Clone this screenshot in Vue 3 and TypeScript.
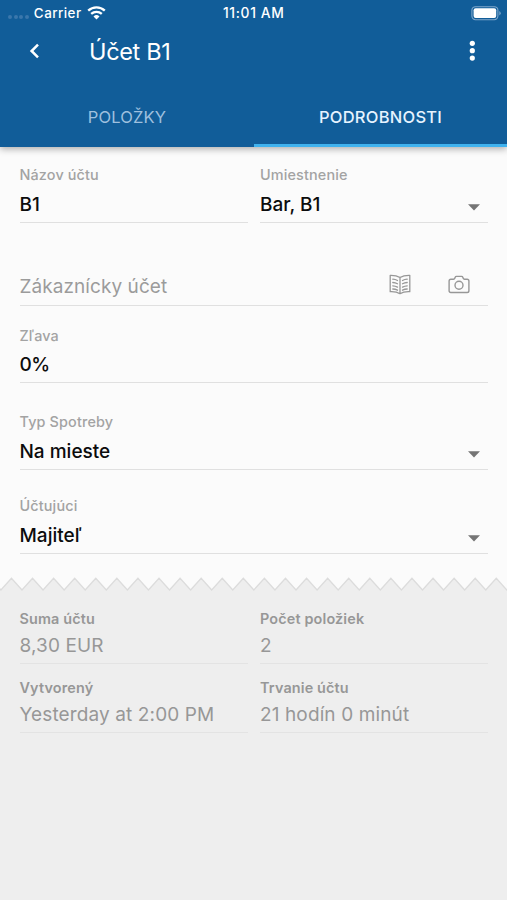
<script setup lang="ts">
interface Field {
  id: string
  label?: string
  value?: string
  placeholder?: string
  select?: boolean
}

const formFields: Field[] = [
  { id: 'name', label: 'Názov účtu', value: 'B1' },
  { id: 'place', label: 'Umiestnenie', value: 'Bar, B1', select: true },
  { id: 'customer', placeholder: 'Zákaznícky účet' },
  { id: 'discount', label: 'Zľava', value: '0%' },
  { id: 'type', label: 'Typ Spotreby', value: 'Na mieste', select: true },
  { id: 'cashier', label: 'Účtujúci', value: 'Majiteľ', select: true },
]

const summary: Field[] = [
  { id: 'sum', label: 'Suma účtu', value: '8,30 EUR' },
  { id: 'count', label: 'Počet položiek', value: '2' },
  { id: 'created', label: 'Vytvorený', value: 'Yesterday at 2:00 PM' },
  { id: 'duration', label: 'Trvanie účtu', value: '21 hodín 0 minút' },
]

// Torn-paper edge: alternating valleys and peaks across the full width.
const period = 21.08
const edge = Array.from({ length: 52 }, (_, i) => {
  const x = (0.9 - period + (i * period) / 2).toFixed(2)
  return `${x},${i % 2 ? 1.2 : 13}`
}).join(' ')
const edgeFill = `${edge} 530,18 -25,18`
</script>

<template>
  <div class="screen">
    <header class="header">
      <div class="status">
        <div class="carrier">
          <span class="signal"><i v-for="n in 4" :key="n" /></span>
          <span class="carrier-name">Carrier</span>
          <svg class="wifi" width="19" height="14" viewBox="0 0 19 14">
            <path d="M1.2 4.7a12 12 0 0 1 16.6 0M4.2 7.9a7.8 7.8 0 0 1 10.6 0" fill="none" stroke="#fff" stroke-width="2.3" />
            <path d="M6.5 10.4a4.4 4.4 0 0 1 6 0l-3 3.1z" fill="#fff" />
          </svg>
        </div>
        <span class="time">11:01 AM</span>
        <svg class="battery" width="30" height="15" viewBox="0 0 30 15">
          <rect x="0.9" y="0.7" width="26" height="13" rx="3.6" fill="none" stroke="#7fa7cb" stroke-width="1.1" />
          <rect x="2.6" y="2.3" width="22.6" height="9.8" rx="2" fill="#fff" />
          <path d="M28.3 5v4.4q1.4-.7 1.4-2.2T28.3 5z" fill="#7fa7cb" />
        </svg>
      </div>
      <div class="toolbar">
        <svg class="back" width="12" height="16" viewBox="0 0 12 16">
          <path d="M10 1.6 3.6 8l6.4 6.4" fill="none" stroke="#fff" stroke-width="2.5" />
        </svg>
        <h1 class="title">Účet B1</h1>
        <svg class="more" width="6" height="22" viewBox="0 0 6 22">
          <circle cx="3.3" cy="3.3" r="2.6" fill="#fff" />
          <circle cx="3.3" cy="10.7" r="2.6" fill="#fff" />
          <circle cx="3.3" cy="18.1" r="2.6" fill="#fff" />
        </svg>
      </div>
      <nav class="tabs">
        <a class="tab items">POLOŽKY</a>
        <a class="tab active">PODROBNOSTI</a>
      </nav>
    </header>

    <main class="form">
      <div v-for="f in formFields" :key="f.id" class="field" :class="f.id">
        <div v-if="f.label" class="label"><span>{{ f.label }}</span></div>
        <div class="value" :class="{ placeholder: f.placeholder }">
          <span class="text">{{ f.value ?? f.placeholder }}</span>
          <svg v-if="f.select" class="caret" width="12" height="7" viewBox="0 0 12 7">
            <path d="M0 .3h12L6 6.5z" fill="#757575" />
          </svg>
          <span v-if="f.placeholder" class="actions">
            <svg width="22" height="22" viewBox="0 0 22 22" fill="none" stroke="#979797" stroke-width="1.3" stroke-linejoin="round" stroke-linecap="round">
              <path d="M11 3.5C8.5 1.9 4.6 1.2 1.2 1.3v16.4c3.6-.2 7.4.5 9.8 2 2.4-1.5 6.2-2.2 9.8-2V1.3C17.4 1.2 13.5 1.9 11 3.5zM11 3.5v16" />
              <path d="M3.8 5.2q2.5.1 4.7 1.3M3.8 8.5q2.5.1 4.7 1.3M3.8 11.8q2.5.1 4.7 1.3M3.8 15q2.5.1 4.7 1.2M18.2 5.2q-2.5.1-4.7 1.3M18.2 8.5q-2.5.1-4.7 1.3M18.2 11.8q-2.5.1-4.7 1.3M18.2 15q-2.5.1-4.7 1.2" />
            </svg>
            <svg width="22" height="22" viewBox="0 0 22 22" fill="none" stroke="#979797" stroke-width="1.4" stroke-linejoin="round">
              <path d="M2.9 5.2h2.6q1 0 1.3-.9l.4-1.1q.3-.8 1.200-.8h5.200q.9 0 1.200.8l.4 1.100q.3.900 1.300.9h2.600q1.800 0 1.800 1.800v9.700q0 1.800-1.800 1.800H2.900q-1.800 0-1.800-1.800V7q0-1.800 1.800-1.800z" />
              <circle cx="11" cy="11.2" r="4" />
            </svg>
          </span>
        </div>
      </div>
    </main>

    <svg class="tear" width="507" height="18" viewBox="0 0 507 18">
      <polygon :points="edgeFill" fill="#eee" />
      <polyline :points="edge" fill="none" stroke="#dcdcdc" stroke-width="1.3" />
    </svg>

    <section class="summary">
      <div v-for="f in summary" :key="f.id" class="field" :class="f.id">
        <div class="label"><span>{{ f.label }}</span></div>
        <div class="value"><span class="text">{{ f.value }}</span></div>
      </div>
    </section>
  </div>
</template>

<style>
body {
  margin: 0;
  background: #eee;
}
</style>

<style scoped>
.screen {
  width: 507px;
  height: 900px;
  overflow: hidden;
  display: flex;
  flex-direction: column;
  background: #fbfbfb;
  font-family: Inter, "Liberation Sans", sans-serif;
}
.header {
  height: 146.5px;
  flex: none;
  display: flex;
  flex-direction: column;
  background: #115d99;
  color: #fff;
  box-shadow: 0 2px 7px rgba(0, 0, 0, 0.32);
}
.status {
  height: 26px;
  display: grid;
  grid-template-columns: 1fr auto 1fr;
  align-items: center;
  padding: 0 6px 0 8px;
  font-size: 13.4px;
  font-weight: 500;
}
.carrier {
  display: flex;
  align-items: center;
}
.carrier-name {
  letter-spacing: 0.45px;
}
.time {
  font-size: 13.8px;
  letter-spacing: 0.65px;
  margin-right: 1.5px;
}
.signal {
  display: flex;
  gap: 1.7px;
  margin: 8px 4.8px 0 0;
}
.signal i {
  width: 4px;
  height: 4px;
  border-radius: 50%;
  background: #3a77ac;
}
.wifi {
  margin-left: 5.5px;
}
.battery {
  justify-self: end;
  margin-right: 0.3px;
}
.toolbar {
  height: 61px;
  display: flex;
  align-items: center;
  padding: 0 32px 12px 28px;
  box-sizing: border-box;
}
.title {
  flex: 1;
  margin: 2px 0 0 49px;
  font-size: 23.5px;
  font-weight: 400;
  line-height: 30px;
  letter-spacing: -0.35px;
}
.tabs {
  display: grid;
  grid-template-columns: 254px 253px;
  grid-template-rows: 59.5px;
  height: 59.5px;
}
.tab {
  box-sizing: border-box;
  height: 59.5px;
  text-align: center;
  line-height: 60px;
  font-size: 16.5px;
  font-weight: 400;
  letter-spacing: 0.15px;
  color: #9fc0df;
}
.tab.active {
  color: #e6f3ff;
  font-weight: 500;
  letter-spacing: 0.25px;
  box-shadow: inset 0 -3px #3fb2ee;
}
.form {
  display: grid;
  grid-template-columns: 228px 228px;
  column-gap: 12.5px;
  padding: 18.5px 19.5px 0;
  height: 411.5px;
  box-sizing: border-box;
  align-content: start;
  flex: none;
}
.field {
  border-bottom: 1px solid #e0e0e0;
  height: 57px;
}
.customer,
.discount,
.type,
.cashier {
  grid-column: 1 / -1;
}
.customer {
  height: 31px;
  margin-top: 51px;
}
.discount {
  height: 56px;
  margin-top: 20px;
}
.type {
  margin-top: 29px;
}
.cashier {
  margin-top: 26px;
}
.label {
  height: 20px;
  line-height: 20px;
  margin-bottom: 7px;
  font-size: 14.4px;
  font-weight: 500;
  letter-spacing: 0.15px;
  color: #a3a3a3;
}
.discount .label {
  margin-bottom: 6px;
}
.value {
  height: 26px;
  line-height: 26px;
  display: flex;
  align-items: center;
  justify-content: space-between;
  font-size: 19px;
  font-weight: 500;
  color: #0c0c0c;
}
.value.placeholder {
  color: #9b9b9b;
  font-weight: 400;
  letter-spacing: 0.07px;
}
.discount .text {
  letter-spacing: -0.6px;
}
.caret {
  margin: 4px 8.5px 0 0;
}
.actions {
  display: flex;
  gap: 37px;
  margin-right: 18px;
  margin-top: -4px;
}
.tear {
  display: block;
  flex: none;
  margin-top: 19px;
}
.summary {
  flex: 1;
  background: #eee;
  display: grid;
  grid-template-columns: 228px 228px;
  column-gap: 12.5px;
  row-gap: 14px;
  align-content: start;
  padding: 14px 19.5px 0;
}
.summary .field {
  height: 54px;
  border-color: #e3e3e3;
}
.summary .label {
  color: #979797;
  font-weight: 600;
  margin-bottom: 4px;
}
.summary .value {
  color: #979797;
  font-weight: 400;
  letter-spacing: 0.12px;
}
</style>
